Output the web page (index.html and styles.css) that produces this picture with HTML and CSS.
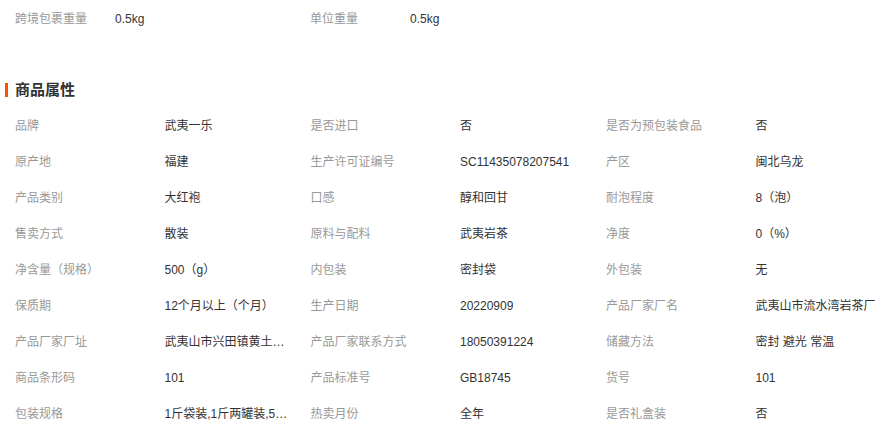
FILE: index.html
```html
<!DOCTYPE html>
<html lang="zh-CN">
<head>
<meta charset="utf-8">
<link rel="stylesheet" href="styles.css">
</head>
<body>
<div class="page">
  <div class="base">
    <div class="base-pair"><span class="label">跨境包裹重量</span><span class="value">0.5kg</span></div>
    <div class="base-pair"><span class="label">单位重量</span><span class="value">0.5kg</span></div>
  </div>
  <h2 class="title">商品属性</h2>
  <div class="attrs">
    <span class="label">品牌</span><span class="value">武夷一乐</span>
    <span class="label">是否进口</span><span class="value">否</span>
    <span class="label">是否为预包装食品</span><span class="value">否</span>

    <span class="label">原产地</span><span class="value">福建</span>
    <span class="label">生产许可证编号</span><span class="value">SC11435078207541</span>
    <span class="label">产区</span><span class="value">闽北乌龙</span>

    <span class="label">产品类别</span><span class="value">大红袍</span>
    <span class="label">口感</span><span class="value">醇和回甘</span>
    <span class="label">耐泡程度</span><span class="value">8（泡）</span>

    <span class="label">售卖方式</span><span class="value">散装</span>
    <span class="label">原料与配料</span><span class="value">武夷岩茶</span>
    <span class="label">净度</span><span class="value">0（%）</span>

    <span class="label">净含量（规格）</span><span class="value">500（g）</span>
    <span class="label">内包装</span><span class="value">密封袋</span>
    <span class="label">外包装</span><span class="value">无</span>

    <span class="label">保质期</span><span class="value">12个月以上（个月）</span>
    <span class="label">生产日期</span><span class="value">20220909</span>
    <span class="label">产品厂家厂名</span><span class="value">武夷山市流水湾岩茶厂</span>

    <span class="label">产品厂家厂址</span><span class="value">武夷山市兴田镇黄土村黄土街</span>
    <span class="label">产品厂家联系方式</span><span class="value">18050391224</span>
    <span class="label">储藏方法</span><span class="value">密封 避光 常温</span>

    <span class="label">商品条形码</span><span class="value">101</span>
    <span class="label">产品标准号</span><span class="value">GB18745</span>
    <span class="label">货号</span><span class="value">101</span>

    <span class="label">包装规格</span><span class="value">1斤袋装,1斤两罐装,5两罐装</span>
    <span class="label">热卖月份</span><span class="value">全年</span>
    <span class="label">是否礼盒装</span><span class="value">否</span>
  </div>
</div>
</body>
</html>
```

FILE: styles.css
```css
html, body {
  margin: 0;
  padding: 0;
  background: #fff;
}
body {
  font-family: "Liberation Sans", "Noto Sans CJK SC", sans-serif;
  font-size: 12px;
  color: #333;
  overflow: hidden;
}
.page {
  width: 890px;
  padding-top: 1px;
}
.base {
  display: flex;
  padding-left: 15px;
  height: 36px;
  line-height: 36px;
}
.base-pair {
  display: flex;
  width: 295px;
}
.base-pair .label {
  width: 100px;
}
.label {
  color: #999;
  white-space: nowrap;
}
.value {
  color: #333;
  white-space: nowrap;
}
.title {
  margin: 41px 0 0 5px;
  height: 24px;
  line-height: 24px;
  font-size: 15px;
  font-weight: bold;
  color: #333;
  display: flex;
  align-items: center;
  gap: 7px;
}
.title::before {
  content: "";
  width: 3px;
  height: 14px;
  background: #ff5000;
}
.attrs {
  margin-top: 6px;
  padding-left: 15px;
  display: grid;
  grid-template-columns: repeat(3, 149.5px 146px);
  grid-auto-rows: 36px;
  line-height: 36px;
}
.attrs .value {
  max-width: 124px;
  overflow: hidden;
  text-overflow: ellipsis;
}
.attrs .value:nth-child(6n) {
  max-width: none;
  overflow: visible;
}
```
